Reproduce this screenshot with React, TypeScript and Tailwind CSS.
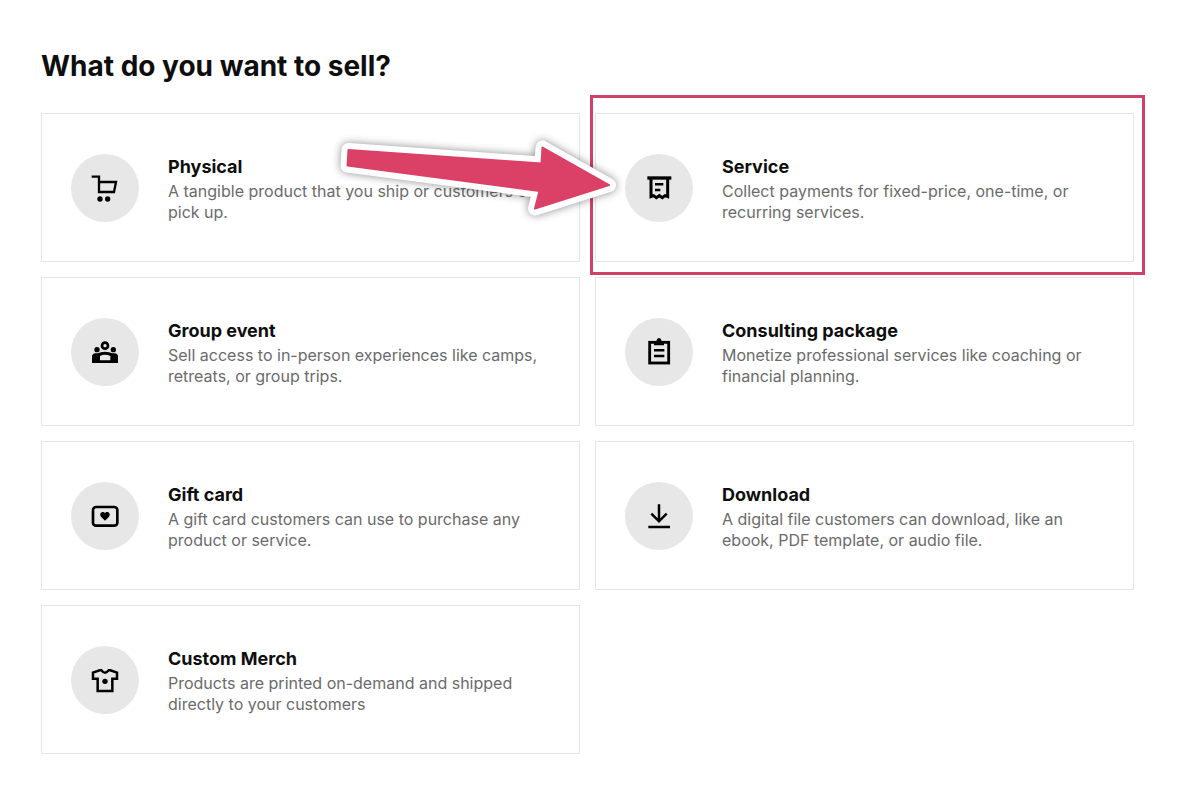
import type { ReactNode } from 'react';

type Product = {
  name: string;
  description: string;
  icon: ReactNode;
  highlighted?: boolean;
};

const Icon = ({ children }: { children: ReactNode }) => (
  <svg
    viewBox="0 0 84 84"
    className="size-7"
    fill="none"
    stroke="currentColor"
    strokeWidth="7.5"
    aria-hidden="true"
  >
    {children}
  </svg>
);

const products: Product[] = [
  {
    name: 'Physical',
    description:
      'A tangible product that you ship or customers can pick up.',
    icon: (
      <Icon>
        <path d="M2 8H24V54H69L75 24H24" strokeWidth="7" />
        <circle cx="27" cy="75" r="8" fill="currentColor" stroke="none" />
        <circle cx="50" cy="75" r="8" fill="currentColor" stroke="none" />
      </Icon>
    ),
  },
  {
    name: 'Service',
    description:
      'Collect payments for fixed-price, one-time, or recurring services.',
    highlighted: true,
    icon: (
      <Icon>
        <path d="M7 12H79" strokeWidth="10" />
        <path
          d="M18 12V68L26 65L34 71L43 65L52 71L60 65L68 68V12"
          strokeWidth="9"
        />
        <path d="M30 31H55M30 48H46" />
      </Icon>
    ),
  },
  {
    name: 'Group event',
    description:
      'Sell access to in-person experiences like camps, retreats, or group trips.',
    icon: (
      <Icon>
        <circle cx="42" cy="23" r="9" strokeWidth="8" />
        <circle cx="18" cy="35" r="8" fill="currentColor" stroke="none" />
        <circle cx="67" cy="35" r="8" fill="currentColor" stroke="none" />
        <path
          fill="currentColor"
          stroke="none"
          fillRule="evenodd"
          d="M3 75V55Q4 47 13 46H21Q28 41 42 41T63 46H71Q80 47 81 55V75ZM27 67H58V54Q42 47 27 54Z"
        />
      </Icon>
    ),
  },
  {
    name: 'Consulting package',
    description:
      'Monetize professional services like coaching or financial planning.',
    icon: (
      <Icon>
        <rect x="14" y="13" width="57" height="62" strokeWidth="8.5" />
        <path
          d="M27 9H34Q36 0 42 0T50 9H57V22H27Z"
          fill="currentColor"
          stroke="none"
        />
        <path d="M27 37H58M27 54H58" />
      </Icon>
    ),
  },
  {
    name: 'Gift card',
    description:
      'A gift card customers can use to purchase any product or service.',
    icon: (
      <Icon>
        <rect x="6" y="15" width="73" height="56" rx="9" strokeWidth="8" />
        <path
          d="M42 56L30 44C24 36 31 28 39 31L42 33L45 31C53 28 60 36 54 44Z"
          fill="currentColor"
          stroke="none"
        />
      </Icon>
    ),
  },
  {
    name: 'Download',
    description:
      'A digital file customers can download, like an ebook, PDF template, or audio file.',
    icon: (
      <Icon>
        <path d="M42 7V59M19 35L42 58L65 35M10 75H75" />
      </Icon>
    ),
  },
  {
    name: 'Custom Merch',
    description:
      'Products are printed on-demand and shipped directly to your customers',
    icon: (
      <Icon>
        <path d="M26 13H31Q42 27 53 13H58L78 20V38H64V75H20V38H6V20Z" />
        <circle cx="42" cy="46" r="8" fill="currentColor" stroke="none" />
      </Icon>
    ),
  },
];

const ARROW =
  'M348.5 150L541.5 163.5L542.5 147.5L609 185L535 208.5L539.5 191L347.5 165.5Z';

const Callout = () => (
  <>
    <div className="pointer-events-none absolute -top-[18px] -right-[11px] -bottom-[13px] -left-[5px] border-[3px] border-[#cf4166]" />
    <svg
      viewBox="335 133 290 90"
      className="pointer-events-none absolute top-5 -left-[260px] h-[90px] w-[290px] overflow-visible drop-shadow-[0_0_4px_rgba(0,0,0,0.45)]"
      strokeLinejoin="round"
      aria-hidden="true"
    >
      <path d={ARROW} fill="#fff" stroke="#fff" strokeWidth="14" />
      <path d={ARROW} fill="#db4067" stroke="#db4067" strokeWidth="2" />
    </svg>
  </>
);

const ProductCard = ({ product }: { product: Product }) => (
  <li className={product.highlighted ? 'relative z-10' : 'relative'}>
    <button
      type="button"
      className="flex h-full min-h-[149px] w-full cursor-pointer items-center gap-[29px] border border-[#e5e5e5] px-[29px] text-left"
    >
      <span className="flex size-[68px] shrink-0 items-center justify-center rounded-full bg-[#e7e7e7] text-black">
        {product.icon}
      </span>
      <span className="min-w-0 flex-1 pt-[3px]">
        <span className="block text-[18px] leading-6 font-bold text-[#0e0e0e]">
          {product.name}
        </span>
        <span className="mt-0.5 block text-[16px] leading-[21px] text-[#6b6b6b]">
          {product.description}
        </span>
      </span>
    </button>
    {product.highlighted && <Callout />}
  </li>
);

const App = () => {
  return (
    <main className="min-h-screen bg-white pt-12 pr-[66px] pb-12 pl-[41px] font-['Inter',sans-serif]">
      <h1 className="text-[28px] leading-9 font-bold text-[#0e0e0e]">
        What do you want to sell?
      </h1>
      <ul className="mt-[29px] grid grid-cols-1 gap-[15px] md:grid-cols-2">
        {products.map((product) => (
          <ProductCard key={product.name} product={product} />
        ))}
      </ul>
    </main>
  );
};

export default App;
